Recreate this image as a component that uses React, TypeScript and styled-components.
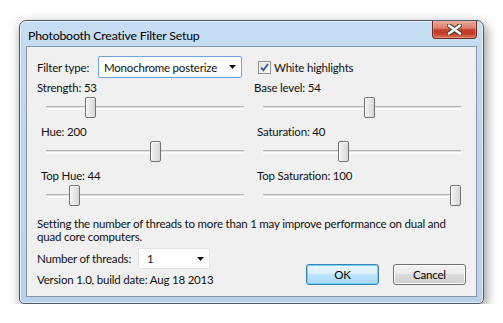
import React from "react";
import styled, {createGlobalStyle} from "styled-components";

type SliderProps = {
    label: string
    value: number
    max: number
    indent?: number
}

const GlobalStyle = createGlobalStyle`
  body {
    margin: 0;
    background: #ffffff;
    font-family: Lato, "Open Sans", sans-serif;
    font-size: 11.5px;
    letter-spacing: -0.2px;
    color: #111;
  }
`

const TRACK = 198;
const THUMB = 11;

function Slider(props: SliderProps) {
    const left = Math.round((props.value / props.max) * (TRACK - THUMB));
    return <SliderField>
        <FieldLabel $indent={props.indent ?? 0}>{props.label}: {props.value}</FieldLabel>
        <SliderBox>
            <Track/>
            <Thumb style={{left}}/>
        </SliderBox>
    </SliderField>
}

function Arrow() {
    return <svg width="7" height="4" viewBox="0 0 7 4">
        <path d="M0 0 H7 L3.5 4 Z" fill="#111"/>
    </svg>
}

export default function App() {
    return <>
        <GlobalStyle/>
        <Desktop>
            <Window>
                <TitleBar>
                    <Title>Photobooth Creative Filter Setup</Title>
                    <CloseButton>
                        <svg width="15" height="11" viewBox="0 0 15 11">
                            <path d="M2 1.5 L13 9.5 M13 1.5 L2 9.5" stroke="#3b3b3b" strokeWidth="4.6"
                                  strokeLinecap="round"/>
                            <path d="M2 1.5 L13 9.5 M13 1.5 L2 9.5" stroke="#ffffff" strokeWidth="2.6"
                                  strokeLinecap="round"/>
                        </svg>
                    </CloseButton>
                </TitleBar>
                <Client>
                    <Columns>
                        <Row>
                            <FieldLabel $width={61}>Filter type:</FieldLabel>
                            <Combo $width={144} $height={22} $focused>
                                <span>Monochrome posterize</span>
                                <Arrow/>
                            </Combo>
                        </Row>
                        <CheckRow>
                            <CheckBox>
                                <svg width="9" height="9" viewBox="0 0 9 9">
                                    <path d="M1 4.6 L3.4 7.2 L8 1" stroke="#3d5b94" strokeWidth="1.9"
                                          fill="none"/>
                                </svg>
                            </CheckBox>
                            <span>White highlights</span>
                        </CheckRow>
                    </Columns>
                    <SliderGrid>
                        <Slider label="Strength" value={53} max={255}/>
                        <Slider label="Base level" value={54} max={100}/>
                        <Slider label="Hue" value={200} max={360} indent={4}/>
                        <Slider label="Saturation" value={40} max={100} indent={3}/>
                        <Slider label="Top Hue" value={44} max={360} indent={4}/>
                        <Slider label="Top Saturation" value={100} max={100} indent={3}/>
                    </SliderGrid>
                    <Note>
                        Setting the number of threads to more than 1 may improve performance on dual and
                        quad core computers.
                    </Note>
                    <Bottom>
                        <div>
                            <Row>
                                <FieldLabel $width={101}>Number of threads:</FieldLabel>
                                <Combo $width={72} $height={21}>
                                    <span>1</span>
                                    <Arrow/>
                                </Combo>
                            </Row>
                            <Version>Version 1.0, build date: Aug 18 2013</Version>
                        </div>
                        <Buttons>
                            <Button $primary>OK</Button>
                            <Button>Cancel</Button>
                        </Buttons>
                    </Bottom>
                </Client>
            </Window>
        </Desktop>
    </>
}

const Desktop = styled.div`
  padding: 20px 0 0 19px;
`

const Window = styled.div`
  box-sizing: border-box;
  width: 465px;
  height: 284px;
  display: flex;
  flex-direction: column;
  padding: 0 6px 6px 6px;
  border: 1px solid #4f5b68;
  border-radius: 7px 7px 5px 5px;
  background: linear-gradient(to bottom, #c6ddf3 0%, #bcd6ef 40%, #b8d2ec 100%);
  box-shadow: inset 0 0 0 1px rgba(255, 255, 255, 0.55), 2px 4px 12px rgba(0, 0, 0, 0.45);
`

const TitleBar = styled.div`
  height: 28px;
  display: flex;
  justify-content: space-between;
  align-items: flex-start;
`

const Title = styled.div`
  padding: 7px 0 0 2px;
  font-size: 12.3px;
  line-height: 15px;
  color: #000;
`

const CloseButton = styled.div`
  box-sizing: border-box;
  width: 45px;
  height: 18px;
  display: flex;
  align-items: center;
  justify-content: center;
  border: 1px solid #6b2b22;
  border-top: none;
  border-radius: 0 0 4px 4px;
  background: linear-gradient(to bottom, #e9a898 0%, #dc7f6b 42%, #c5422d 52%, #c03a26 72%, #dd7359 100%);
  box-shadow: inset 0 0 0 1px rgba(255, 200, 190, 0.35);
`

const Client = styled.div`
  flex: 1;
  padding: 9px 10px;
  border: 1px solid #8796a8;
  background: #f0f0f0;
`

const Columns = styled.div`
  display: grid;
  grid-template-columns: 217px 1fr;
  margin-bottom: 2px;
`

const Row = styled.div`
  display: flex;
  align-items: center;
`

const FieldLabel = styled.div<{ $width?: number, $indent?: number }>`
  flex: none;
  width: ${p => p.$width ? p.$width + "px" : "auto"};
  padding-left: ${p => p.$indent ?? 0}px;
  line-height: 15px;
  white-space: nowrap;
`

const Combo = styled.div<{ $width: number, $height: number, $focused?: boolean }>`
  box-sizing: border-box;
  width: ${p => p.$width}px;
  height: ${p => p.$height}px;
  display: flex;
  align-items: center;
  justify-content: space-between;
  padding: 0 5px 0 5px;
  background: #ffffff;
  border: 1px solid ${p => p.$focused ? "#6ea6dc" : "#e4e4e4"};
  border-radius: 2px;
  line-height: 15px;

  span {
    padding-left: ${p => p.$focused ? 0 : 3}px;
  }
`

const CheckRow = styled.div`
  display: flex;
  align-items: center;
  gap: 3px;
  padding-left: 4px;
  line-height: 15px;
`

const CheckBox = styled.div`
  box-sizing: border-box;
  width: 13px;
  height: 13px;
  display: flex;
  align-items: center;
  justify-content: center;
  border: 1px solid #8e8f8f;
  background: linear-gradient(135deg, #dcdcdc 0%, #f6f6f6 70%, #ffffff 100%);
  box-shadow: inset 0 0 0 1px #f4f4f4;
`

const SliderGrid = styled.div`
  display: grid;
  grid-template-columns: 217px 1fr;
  row-gap: 6px;
`

const SliderField = styled.div`
  display: flex;
  flex-direction: column;
`

const SliderBox = styled.div`
  position: relative;
  width: ${TRACK}px;
  height: 21px;
  margin: 2px 0 0 9px;
`

const Track = styled.div`
  position: absolute;
  left: 0;
  right: 0;
  top: 9px;
  height: 1px;
  background: #b4b4b4;
  border-bottom: 1px solid #e2e2e2;
  box-shadow: 0 2px 0 #fbfbfb;
`

const Thumb = styled.div`
  position: absolute;
  top: 0;
  box-sizing: border-box;
  width: ${THUMB}px;
  height: 21px;
  border: 1px solid #717171;
  border-radius: 2px;
  background: linear-gradient(to right, #f4f4f4 0%, #e6e6e6 50%, #d6d6d6 100%);
  box-shadow: inset 1px 1px 0 #ffffff;
`

const Note = styled.p`
  margin: 11px 0 0 0;
  line-height: 13px;
`

const Bottom = styled.div`
  display: flex;
  justify-content: space-between;
  align-items: flex-end;
  margin-top: 5px;
`

const Version = styled.div`
  margin-top: 3px;
  line-height: 15px;
`

const Buttons = styled.div`
  display: flex;
  gap: 14px;
  margin-bottom: 2px;
`

const Button = styled.button<{ $primary?: boolean }>`
  box-sizing: border-box;
  width: 73px;
  height: 21px;
  padding: 0;
  font: inherit;
  letter-spacing: inherit;
  color: #000;
  border-radius: 3px;
  border: 1px solid ${p => p.$primary ? "#3c7fb1" : "#707070"};
  background: ${p => p.$primary
          ? "linear-gradient(to bottom, #eaf6fd 0%, #d9f0fc 45%, #bee6fd 50%, #a7d9f5 100%)"
          : "linear-gradient(to bottom, #f2f2f2 0%, #ebebeb 45%, #dddddd 50%, #cfcfcf 100%)"};
  box-shadow: inset 0 0 0 1px ${p => p.$primary ? "#6fd0fb" : "#fcfcfc"};
`
